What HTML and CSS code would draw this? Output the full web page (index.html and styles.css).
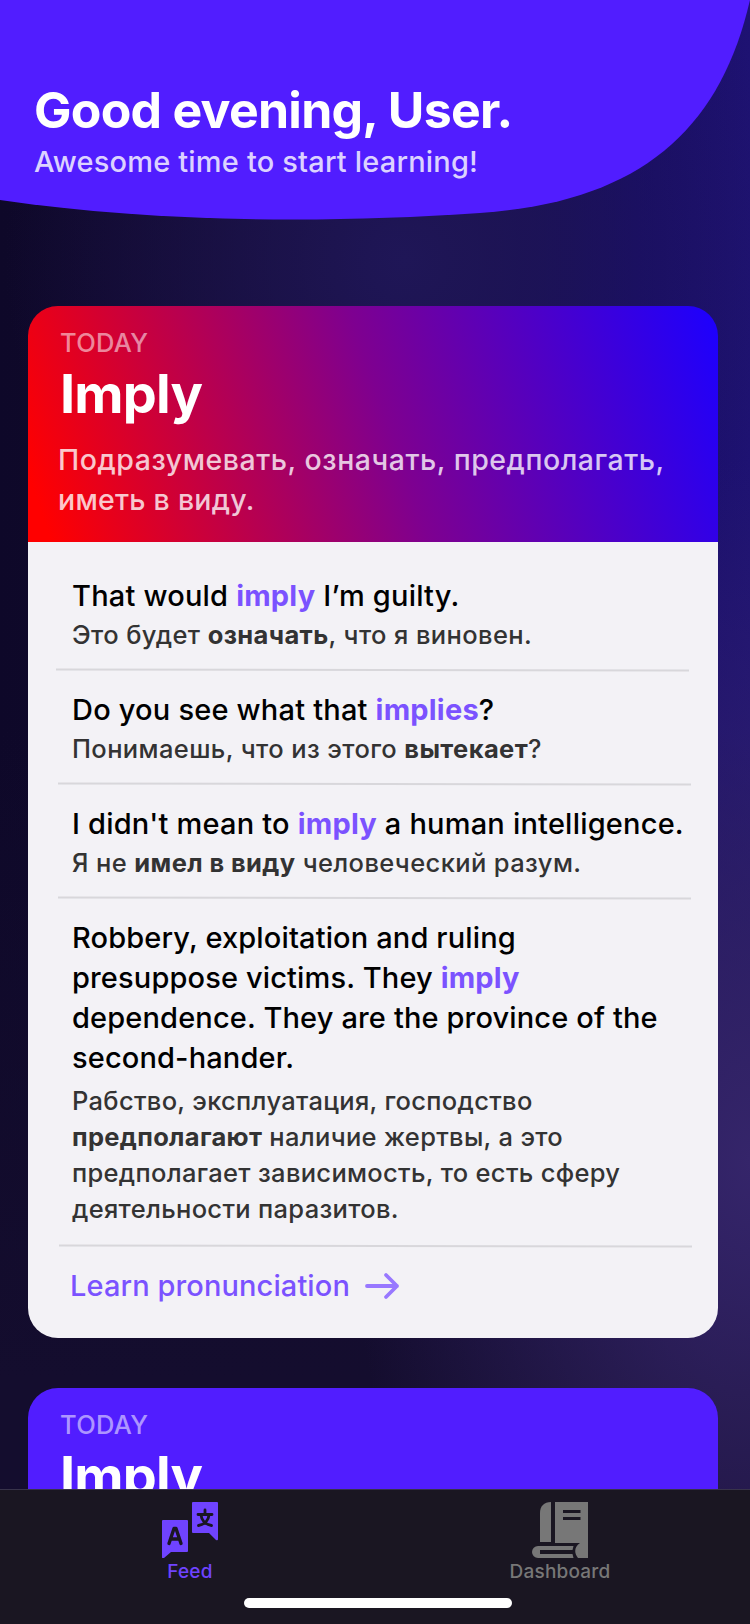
FILE: index.html
```html
<!DOCTYPE html>
<html lang="en">
<head>
<meta charset="utf-8">
<title>Feed</title>
<link rel="stylesheet" href="styles.css">
</head>
<body>
<div class="screen">
  <header class="hero">
    <svg class="hero-shape" width="750" height="222" viewBox="0 0 750 222"><path d="M0 0H750C720 130 640 202 480 213C320 224 150 222 0 200Z" fill="#511dff"/></svg>
    <div class="hero-text">
      <h1>Good evening, User.</h1>
      <p>Awesome time to start learning!</p>
    </div>
  </header>
  <main class="feed">
    <article class="card">
      <div class="card-head gradient">
        <div class="label">TODAY</div>
        <h2>Imply</h2>
        <p class="meaning">Подразумевать, означать, предполагать,<br><span class="tight">иметь в виду.</span></p>
      </div>
      <div class="card-body">
        <section class="example first">
          <p class="en">That would <b>imply</b> I’m guilty.</p>
          <p class="ru">Это будет <b>означать</b>, что я виновен.</p>
        </section>
        <hr class="rule">
        <section class="example">
          <p class="en">Do you see what that <b>implies</b>?</p>
          <p class="ru">Понимаешь, что из этого <b>вытекает</b>?</p>
        </section>
        <hr class="rule inset">
        <section class="example">
          <p class="en">I didn't mean to <b>imply</b> a human intelligence.</p>
          <p class="ru">Я не <b>имел в виду</b> человеческий разум.</p>
        </section>
        <hr class="rule inset">
        <section class="example long">
          <p class="en">Robbery, exploitation and ruling<br>presuppose victims. They <b>imply</b><br>dependence. They are the province of the<br>second-hander.</p>
          <p class="ru">Рабство, эксплуатация, господство<br><b>предполагают</b> наличие жертвы, а это<br>предполагает зависимость, то есть сферу<br>деятельности паразитов.</p>
        </section>
        <hr class="rule last">
        <a class="learn"><span>Learn pronunciation</span>
          <svg width="36" height="28" viewBox="0 0 36 28" fill="none" stroke="#9878ff" stroke-width="3.8" stroke-linecap="round" stroke-linejoin="round"><path d="M3 14H33M22 3L33 14L22 25"/></svg>
        </a>
      </div>
    </article>
    <article class="card">
      <div class="card-head solid">
        <div class="label">TODAY</div>
        <h2>Imply</h2>
      </div>
    </article>
  </main>
  <nav class="tabs">
    <div class="tab active">
      <svg width="56" height="56" viewBox="0 0 56 56"><path fill="currentColor" d="M1 18H25Q26 18 26 19V49Q26 50 25 50H9L2 56Q0 57 0 55V19Q0 18 1 18ZM31 0H55Q56 0 56 1V37Q56 39 54 38L47 31H31Q30 31 30 30V1Q30 0 31 0Z"/><path fill="none" stroke="#1a1622" stroke-width="3.400" stroke-linecap="round" stroke-linejoin="round" d="M7 41.500L12 26.500H14L19 41.500M9 37H17"/><path fill="none" stroke="#1a1622" stroke-width="2.800" stroke-linecap="round" stroke-linejoin="round" d="M43 8V12M36 12.500H50M39 13C39.500 18 43 22.500 49.500 23.500M47 13C46.500 18 43 22.500 36.500 23.500"/></svg>
      <span>Feed</span>
    </div>
    <div class="tab">
      <svg width="56" height="56" viewBox="0 0 56 56" fill="currentColor"><path d="M19 0C12 0 8 4 8 11V40H19Z"/><path fill-rule="evenodd" d="M23 0H56V56H46C42 51 42 45 48 41H23ZM31 8V11H48.500V8ZM31 15V18H48.500V15Z"/><path d="M6 44H41.500L40.500 48H8V52H40.500L41.500 56H6A6 6 0 0 1 6 44Z"/></svg>
      <span>Dashboard</span>
    </div>
    <div class="home"></div>
  </nav>
</div>
</body>
</html>
```
FILE: styles.css
```css
* { box-sizing: border-box; margin: 0; padding: 0; }
body { font-family: Inter, "Noto Sans", sans-serif; overflow: hidden; }
.screen {
  position: relative;
  width: 750px;
  height: 1624px;
  overflow: hidden;
  display: flex;
  flex-direction: column;
  background:
    radial-gradient(ellipse 400px 700px at 100% 1160px, #35256a 0%, rgba(53,37,106,0) 100%),
    radial-gradient(ellipse 400px 400px at 54% 260px, #1f1657 0%, rgba(31,22,87,0) 100%),
    linear-gradient(180deg, rgba(20,13,46,0) 0%, rgba(20,13,46,0) 45%, #140d2e 85%),
    linear-gradient(90deg, #0e0829 0%, #140b30 45%, #180c68 85%, #1e1272 100%);
}
.hero { position: relative; height: 306px; flex: none; }
.hero-shape { position: absolute; left: 0; top: 0; }
.hero-text { position: relative; padding: 80px 0 0 34px; color: #fff; white-space: nowrap; }
h1 { font-size: 50px; line-height: 60px; font-weight: 700; letter-spacing: -.75px; }
.hero-text p { font-size: 29px; line-height: 40px; padding-top: 2px; font-weight: 450; letter-spacing: .18px; color: #dcd2ff; }
.feed { height: 1183px; overflow: hidden; padding: 0 32px 0 28px; flex: none; display: flex; flex-direction: column; gap: 50px; white-space: nowrap; }
.card { border-radius: 30px; overflow: hidden; flex: none; }
.card-head { height: 236px; padding: 20px 0 0 30px; color: #fff; }
.gradient { background: linear-gradient(71deg, #f00 0%, #f00 3%, #7e0090 52%, #1c00ff 100%); }
.solid { background: #511dff; }
.label { font-size: 25.5px; line-height: 34px; padding-left: 2px; font-weight: 450; letter-spacing: .3px; color: rgba(255,255,255,.54); }
h2 { font-size: 54px; line-height: 64px; font-weight: 700; padding: 2px 0 0 2px; letter-spacing: -.8px; }
.meaning { font-size: 28.5px; line-height: 40px; margin-top: 14px; font-weight: 450; letter-spacing: .52px; color: rgba(255,255,255,.78); }
.tight { letter-spacing: .25px; }
.card-body { background: #f3f2f6; height: 796px; padding: 34px 0 0 28px; }
.example { padding: 19px 0 16px 16px; }
.first { padding-top: 0; }
.en { font-size: 29px; line-height: 40px; font-weight: 450; letter-spacing: .2px; color: #000; }
.en b { color: #7b52ff; font-weight: 700; }
.ru { font-size: 25.5px; line-height: 36px; margin-top: 1px; font-weight: 450; letter-spacing: .38px; color: #333; }
.ru b { font-weight: 700; }
.long { padding-bottom: 18px; }
.long .en { letter-spacing: .14px; }
.long .ru { margin-top: 5px; letter-spacing: .31px; }
.rule { border: 0; height: 2px; width: 633px; background: #d8d7db; transform: rotate(.09deg); }
.inset { margin-left: 2px; }
.last { margin-left: 3px; }
.learn { display: flex; align-items: center; gap: 14px; padding: 19px 0 0 14px; font-size: 29px; line-height: 40px; font-weight: 450; letter-spacing: .1px; color: #7b52ff; }
.tabs { position: relative; height: 135px; background: #1a1622; border-top: 1px solid #38334a; display: grid; grid-template-columns: 380px 360px; }
.tab { display: flex; flex-direction: column; align-items: center; padding-top: 12px; font-size: 19px; line-height: 28px; font-weight: 450; letter-spacing: .2px; color: #777; }
.active { color: #6f43ff; }
.home { position: absolute; left: 244px; top: 108px; width: 268px; height: 10px; border-radius: 5px; background: #fff; }
```
